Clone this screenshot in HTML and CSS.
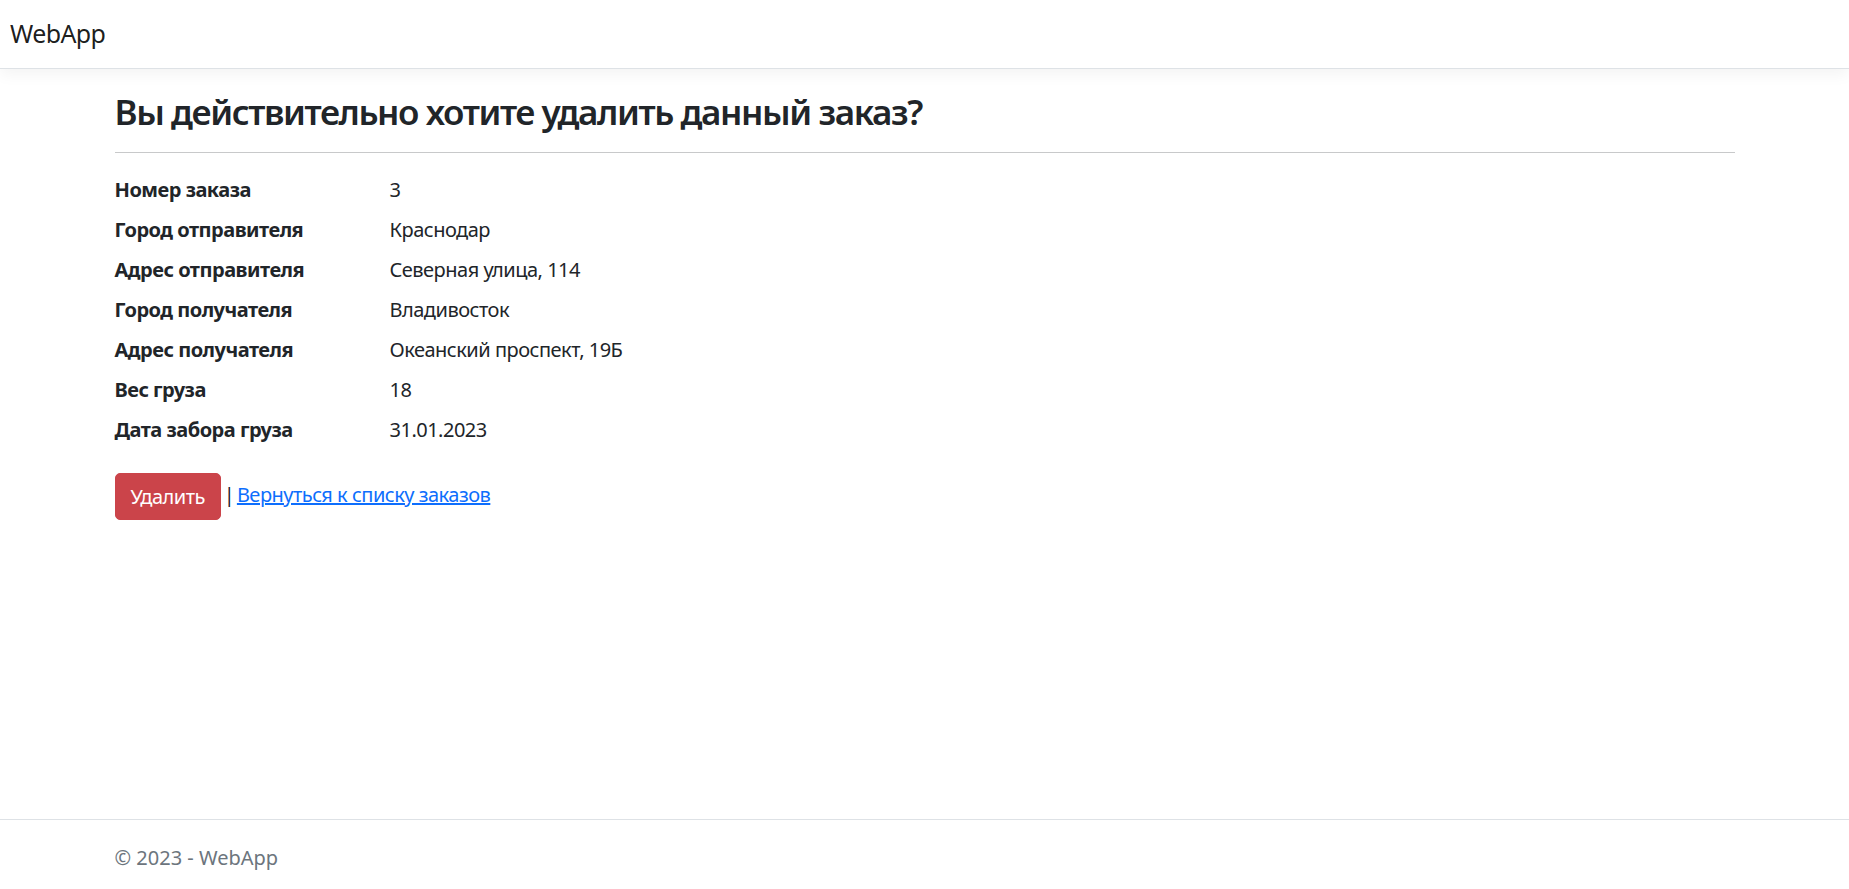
FILE: index.html
```html
<!DOCTYPE html>
<html lang="ru">
<head>
<meta charset="utf-8">
<title>Удаление заказа - WebApp</title>
<link rel="stylesheet" href="styles.css">
</head>
<body>
<header>
  <nav class="navbar">
    <a class="navbar-brand" href="#">WebApp</a>
  </nav>
</header>
<div class="container">
  <main class="main">
    <h3 class="title">Вы действительно хотите удалить данный заказ?</h3>
    <hr class="divider">
    <dl class="details">
      <dt>Номер заказа</dt><dd>3</dd>
      <dt>Город отправителя</dt><dd>Краснодар</dd>
      <dt>Адрес отправителя</dt><dd>Северная улица, 114</dd>
      <dt>Город получателя</dt><dd>Владивосток</dd>
      <dt>Адрес получателя</dt><dd>Океанский проспект, 19Б</dd>
      <dt>Вес груза</dt><dd>18</dd>
      <dt>Дата забора груза</dt><dd>31.01.2023</dd>
    </dl>
    <form class="actions">
      <button type="button" class="btn-danger">Удалить</button> | <a class="back-link" href="#">Вернуться к списку заказов</a>
    </form>
  </main>
</div>
<footer class="footer">
  <div class="container">© 2023 - WebApp</div>
</footer>
</body>
</html>
```
FILE: styles.css
```css
html, body {
  margin: 0;
  padding: 0;
}
body {
  font-family: "Noto Sans", "Open Sans", sans-serif;
  font-size: 20px;
  line-height: 1.5;
  letter-spacing: -0.5px;
  color: #212529;
  background: #fff;
  min-height: 100vh;
  display: flex;
  flex-direction: column;
  box-sizing: border-box;
}
.navbar {
  height: 68px;
  display: flex;
  align-items: center;
  padding: 0 10px;
  border-bottom: 1px solid #dee2e6;
  box-shadow: 0 5px 15px rgba(0, 0, 0, 0.05);
  margin-bottom: 22px;
  background: #fff;
}
.navbar-brand {
  font-size: 25px;
  line-height: 37.5px;
  letter-spacing: -0.6px;
  color: rgba(0, 0, 0, 0.9);
  text-decoration: none;
}
.container {
  width: 1650px;
  max-width: 100%;
  margin: 0 auto;
  padding: 0 15px;
  box-sizing: border-box;
}
.main {
  padding-bottom: 20px;
}
.title {
  font-size: 35px;
  font-weight: 600;
  line-height: 1.2;
  letter-spacing: -1.4px;
  margin: 0 0 10px;
}
.divider {
  margin: 19px 0 22px;
  border: 0;
  border-top: 1px solid #c8c9ca;
  height: 0;
}
.details {
  display: grid;
  grid-template-columns: 245px 1fr;
  column-gap: 30px;
  margin: 0 0 18px;
}
.details dt {
  font-weight: 700;
  margin: 0;
}
.details dd {
  margin: 0 0 10px;
}
.actions {
  margin: 0;
  word-spacing: -2px;
}
.btn-danger {
  font-family: inherit;
  font-size: 20px;
  line-height: 30px;
  letter-spacing: -0.5px;
  padding: 7.5px 15px;
  color: #fff;
  background: #cb444a;
  border: 1px solid #cb444a;
  border-radius: 5px;
  cursor: pointer;
  vertical-align: middle;
}
.back-link {
  color: #0d6efd;
  text-decoration: underline;
  word-spacing: 0;
}
.footer {
  margin-top: auto;
  border-top: 1px solid #dee2e6;
  padding-top: 7px;
  line-height: 62px;
  letter-spacing: 0;
  color: #6c757d;
  white-space: nowrap;
}
```
